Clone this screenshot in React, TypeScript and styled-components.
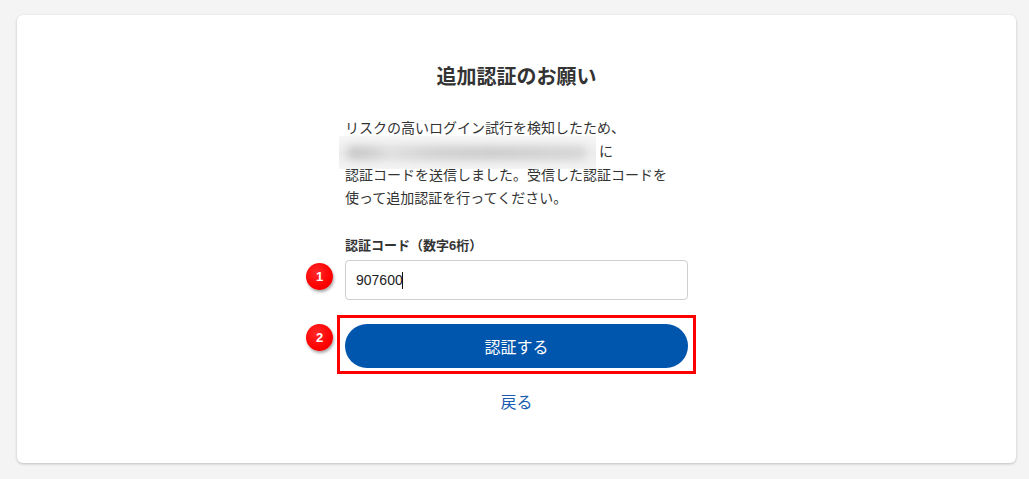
import React from "react";
import styled, { createGlobalStyle } from "styled-components";

const GlobalStyle = createGlobalStyle`
  html, body { margin: 0; padding: 0; }
  body {
    background: #f4f4f4;
    font-family: "Liberation Sans", "Noto Sans CJK JP", sans-serif;
    color: #333;
  }
`;

const Page = styled.div`
  padding: 15px 13px 16px 17px;
`;

const Card = styled.div`
  background: #fff;
  border-radius: 6px;
  box-shadow: 0 1px 3px rgba(0, 0, 0, 0.22);
  height: 448px;
  box-sizing: border-box;
  padding-top: 49px;
  display: flex;
  flex-direction: column;
  align-items: center;
`;

const Title = styled.h1`
  margin: 0;
  font-size: 20px;
  line-height: 26px;
  font-weight: 700;
  color: #333;
`;

const Column = styled.div`
  width: 343px;
  margin-top: 27px;
  display: flex;
  flex-direction: column;
`;

const Message = styled.p`
  margin: 0;
  font-size: 14px;
  line-height: 23.4px;
  color: #333;
`;

const Redacted = styled.span`
  display: inline-block;
  position: relative;
  width: 257px;
  height: 23.4px;
  margin-left: -6px;
  vertical-align: top;

  &::before {
    content: "";
    position: absolute;
    left: 0;
    right: 0;
    top: -4px;
    bottom: -5px;
    background: linear-gradient(180deg, #f6f6f6 0%, #ececec 50%, #f4f4f4 100%);
  }
  &::after {
    content: "";
    position: absolute;
    left: 8px;
    right: 10px;
    top: 6px;
    bottom: 4px;
    border-radius: 6px;
    background: linear-gradient(90deg, #c6c6c6 0%, #cfcfcf 10%, #e0e0e0 18%, #d2d2d2 35%, #cdcdcd 60%, #d6d6d6 100%);
    filter: blur(4px);
  }
`;

const After = styled.span`
  margin-left: 3px;
`;

const Label = styled.label`
  margin-top: 25px;
  font-size: 13px;
  line-height: 20px;
  font-weight: 700;
  color: #333;
`;

const Field = styled.div`
  position: relative;
  margin-top: 4px;
`;

const Input = styled.input`
  display: block;
  box-sizing: border-box;
  width: 100%;
  height: 40px;
  border: 1px solid #cfcfcf;
  border-radius: 4px;
  padding: 0 10px;
  font-family: "Liberation Sans", "Noto Sans CJK JP", sans-serif;
  font-size: 14px;
  color: #222;
  background: #fff;
  outline: none;
`;

const Caret = styled.span`
  position: absolute;
  left: 57px;
  top: 12px;
  width: 1px;
  height: 17px;
  background: #111;
`;

const Badge = styled.span<{ $top: number }>`
  position: absolute;
  left: -39px;
  top: ${(p) => p.$top}px;
  width: 27px;
  height: 27px;
  border-radius: 50%;
  background: radial-gradient(circle at 40% 35%, #ff2a2a 0%, #f00 60%, #e00000 100%);
  box-shadow: 1px 2px 3px rgba(0, 0, 0, 0.35);
  color: #fff;
  font-family: "Liberation Sans", sans-serif;
  font-weight: 700;
  font-size: 13px;
  display: flex;
  align-items: center;
  justify-content: center;
`;

const ButtonWrap = styled.div`
  position: relative;
  margin-top: 24px;

  &::after {
    content: "";
    position: absolute;
    left: -8px;
    right: -8px;
    top: -9px;
    bottom: -6px;
    border: 3px solid #ff0000;
    pointer-events: none;
  }
`;

const Submit = styled.button`
  display: block;
  width: 100%;
  height: 44px;
  border: none;
  border-radius: 22px;
  background: #0055ad;
  color: #fff;
  font-family: "Liberation Sans", "Noto Sans CJK JP", sans-serif;
  font-size: 16px;
  cursor: pointer;
`;

const Back = styled.a`
  margin-top: 23px;
  align-self: center;
  font-size: 16px;
  line-height: 24px;
  color: #1a5db0;
  text-decoration: none;
`;

export default function App() {
  return (
    <>
      <GlobalStyle />
      <Page>
        <Card>
          <Title>追加認証のお願い</Title>
          <Column>
            <Message>
              リスクの高いログイン試行を検知したため、
              <br />
              <Redacted />
              <After>に</After>
              <br />
              認証コードを送信しました。受信した認証コードを
              <br />
              使って追加認証を行ってください。
            </Message>
            <Label htmlFor="code">認証コード（数字6桁）</Label>
            <Field>
              <Badge $top={3}>1</Badge>
              <Input id="code" defaultValue="907600" />
              <Caret />
            </Field>
            <ButtonWrap>
              <Badge $top={0}>2</Badge>
              <Submit>認証する</Submit>
            </ButtonWrap>
            <Back href="#">戻る</Back>
          </Column>
        </Card>
      </Page>
    </>
  );
}
